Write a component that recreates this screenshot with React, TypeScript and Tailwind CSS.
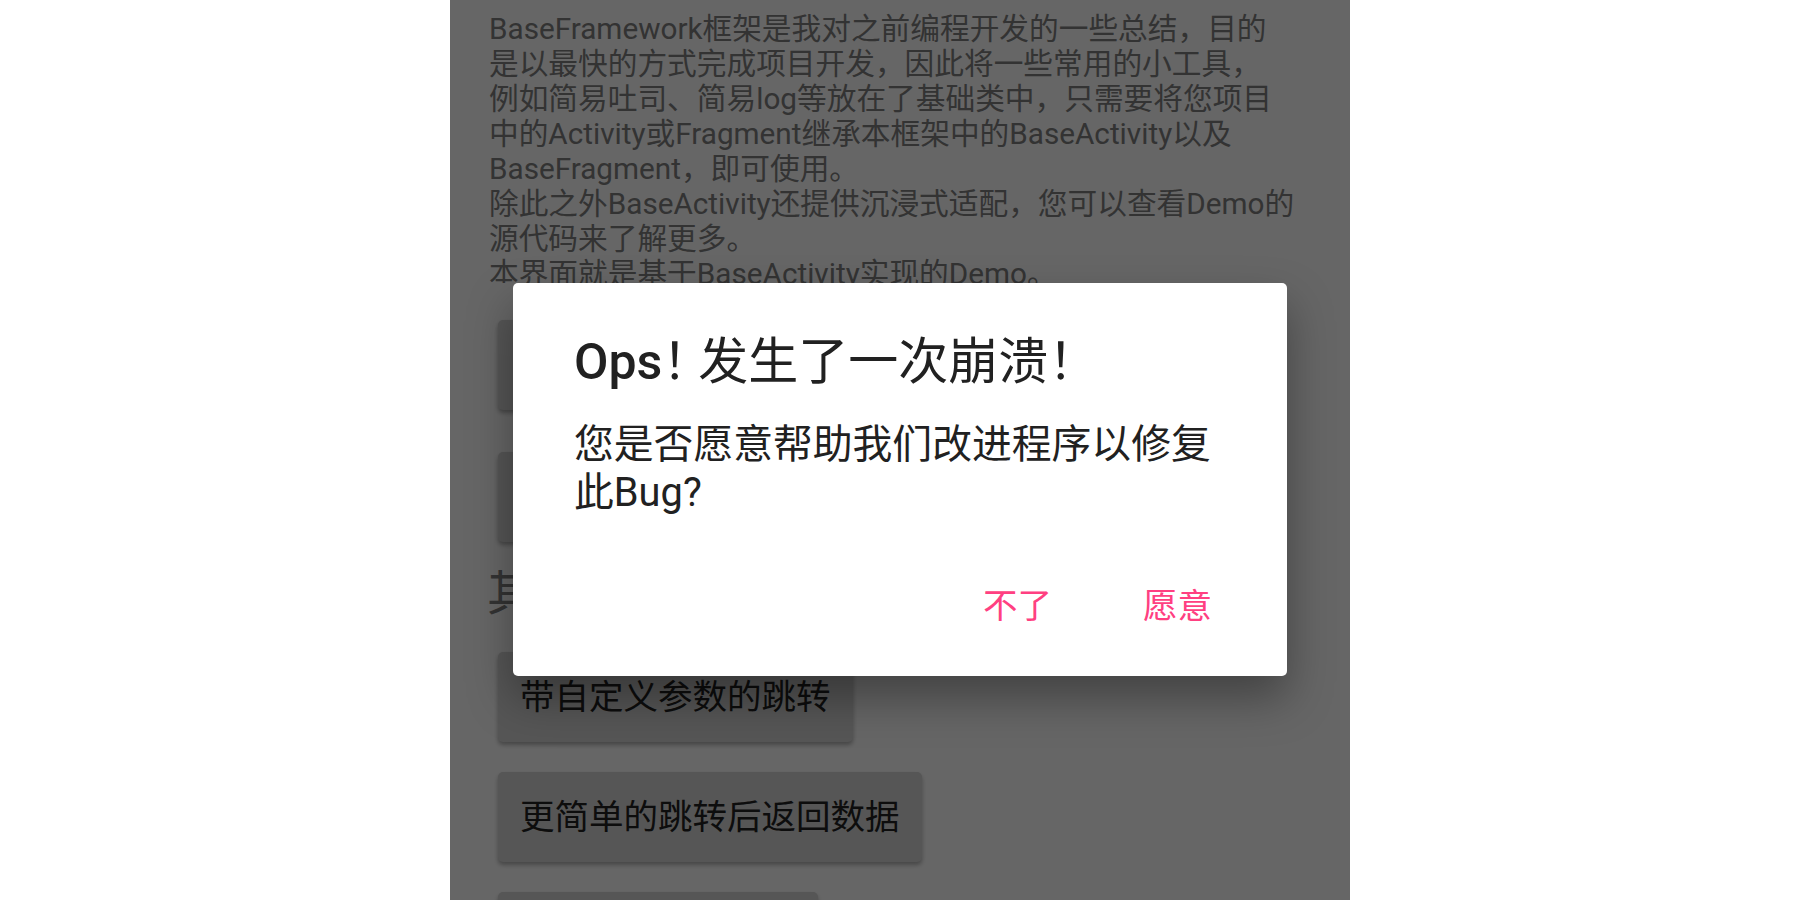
const lines = [
  "BaseFramework框架是我对之前编程开发的一些总结，目的",
  "是以最快的方式完成项目开发，因此将一些常用的小工具，",
  "例如简易吐司、简易log等放在了基础类中，只需要将您项目",
  "中的Activity或Fragment继承本框架中的BaseActivity以及",
  "BaseFragment，即可使用。",
  "除此之外BaseActivity还提供沉浸式适配，您可以查看Demo的",
  "源代码来了解更多。",
  "本界面就是基于BaseActivity实现的Demo。",
]

function DemoButton({ label, className = "" }: { label: string; className?: string }) {
  return (
    <div
      className={`flex h-[90px] w-fit items-center rounded-[5px] bg-[#d6d6d6] px-[22px] text-[34.5px] text-[#222] shadow-[0_3px_4px_rgba(0,0,0,0.3)] ${className}`}
    >
      <span className="whitespace-nowrap leading-[40px]">{label}</span>
    </div>
  )
}

export default function App() {
  return (
    <div className="flex h-[900px] w-full justify-center overflow-hidden bg-white font-['Roboto','Noto_Sans_CJK_SC',sans-serif]">
      <div className="relative h-[900px] w-[900px] overflow-hidden bg-white">
        {/* page content */}
        <div className="h-[283px] overflow-hidden pl-[39px] pt-[11px] text-[29.7px] text-[#808080]">
          {lines.map((l) => (
            <div key={l} className="h-[35px] whitespace-nowrap leading-[35px]">
              {l}
            </div>
          ))}
        </div>
        <div className="flex flex-col pl-[48px]">
          <DemoButton label="普通的跳转与返回" className="mt-[37px]" />
          <DemoButton label="跳转后返回数据示例" className="mt-[42px]" />
          <div className="ml-[-11px] mt-[22px] h-[60px] whitespace-nowrap text-[48px] leading-[60px] text-[#808080]">
            其他功能
          </div>
          <DemoButton label="带自定义参数的跳转" className="mt-[28px]" />
          <DemoButton label="更简单的跳转后返回数据" className="mt-[30px]" />
          <DemoButton label="简易权限申请工具" className="mt-[30px]" />
        </div>

        {/* dim */}
        <div className="absolute inset-0 bg-black/60" />

        {/* dialog */}
        <div className="absolute left-[63px] top-[283px] h-[393px] w-[774px] rounded-[5px] bg-white pl-[61px] pr-[61px] pt-[54px] shadow-[0_22px_45px_rgba(0,0,0,0.35)]">
          <div className="h-[50px] whitespace-nowrap text-[50px] leading-[50px] text-[#212121]">
            <span className="font-medium">Ops</span>
            <span className="inline-block w-[36px]">！</span>发生了一次崩溃
            <span className="inline-block w-[36px]">！</span>
          </div>
          <div className="mt-[34px] text-[39.8px] text-[#212121]">
            <div className="h-[48.3px] whitespace-nowrap leading-[48.3px]">您是否愿意帮助我们改进程序以修复</div>
            <div className="h-[48.3px] whitespace-nowrap leading-[48.3px]">此Bug?</div>
          </div>
          <div className="mt-[68px] flex justify-end gap-[91px] pr-[14px] text-[34.5px] text-[#ff4081]">
            <span className="h-[40px] leading-[40px]">不了</span>
            <span className="h-[40px] leading-[40px]">愿意</span>
          </div>
        </div>
      </div>
    </div>
  )
}
